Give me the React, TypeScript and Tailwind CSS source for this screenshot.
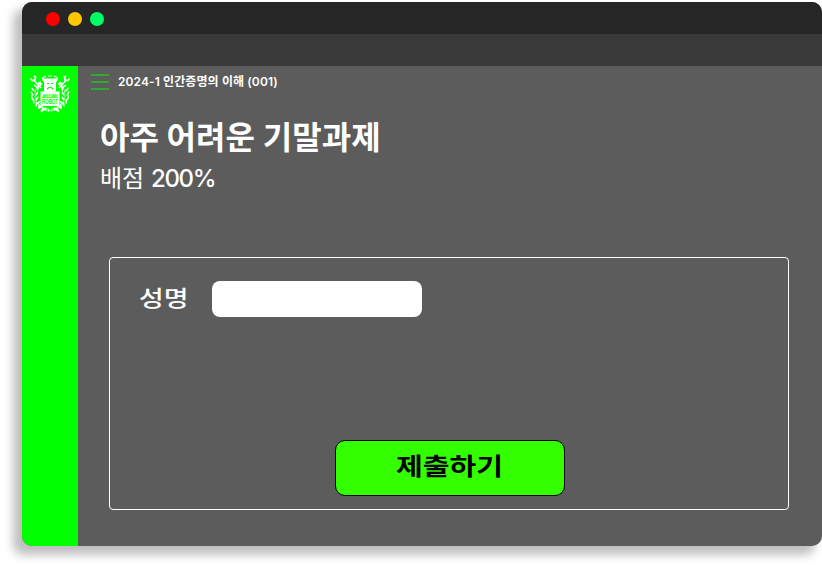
const leaves = [
  [12, 34, -50], [9.5, 31.5, -58], [7, 28, -70], [5.5, 24, -82], [5.5, 19.5, -92], [6.5, 15, -105], [9, 11, -120], [12.5, 7.5, -140],
];

function Branch() {
  return (
    <g>
      <path d="M10 10 Q3 20 8 29 Q12 34 20 35" fill="none" stroke="#fff" strokeWidth="0.6" />
      {leaves.map(([x, y, r]) => (
        <g key={y} transform={`translate(${x} ${y}) rotate(${r})`} fill="#fff">
          <ellipse cx="1" cy="-2.3" rx="2.5" ry="0.9" transform="rotate(-25)" />
          <ellipse cx="1" cy="2.3" rx="2.5" ry="0.9" transform="rotate(25)" />
        </g>
      ))}
      <path d="M1.5 4.5 L3 6.5 L6 6 L6.5 3 L5 2" fill="none" stroke="#fff" strokeWidth="1.7" />
      <path d="M5 6.5 L12 14 M17 34 L12 38" stroke="#fff" strokeWidth="1.4" />
    </g>
  );
}

function Crest() {
  return (
    <svg width="42" height="40" viewBox="0 0 42 40" aria-label="ROBOT">
      <Branch />
      <g transform="translate(42 0) scale(-1 1)"><Branch /></g>
      <path d="M14 3.5 L17 2 M19 2 H23 M25 2 L28 3.5" stroke="#fff" strokeWidth="1.2" />
      <path d="M15 4.5 H27 V16.5 L25 18.5 H17 L15 16.5 Z" fill="#fff" />
      <path d="M18 9.5 H20 M22 9.5 H24 M18.5 15.5 V14.5 L20 13.5 H22 L23.5 14.5 V15.5" stroke="#00ff00" strokeWidth="1.2" fill="none" />
      <rect x="11.5" y="17.5" width="19" height="14.5" fill="#fff" />
      <path d="M13 23.5 H29" stroke="#00ff00" strokeWidth="0.7" />
      <text x="21" y="22.5" textAnchor="middle" fontFamily="Liberation Sans, sans-serif" fontSize="4" fontWeight="bold" fill="#00ff00" textLength="15">ANYVAN</text>
      <text x="21" y="30" textAnchor="middle" fontFamily="Liberation Sans, sans-serif" fontSize="6.5" fontWeight="bold" fill="#00ff00" textLength="16" lengthAdjust="spacingAndGlyphs">ROBOT</text>
      <path d="M13 34 Q21 39 29 34" stroke="#fff" strokeWidth="1.8" strokeDasharray="2 1" fill="none" />
    </svg>
  );
}

export default function App() {
  return (
    <div className="h-[566px] w-[822px] overflow-hidden bg-white pl-[22px] pt-[2px] font-['Inter','Noto_Sans_CJK_KR',sans-serif] text-white">
      <div className="flex h-[544px] w-[800px] flex-col overflow-hidden rounded-[10px] bg-[#5c5c5c] shadow-[-8px_8px_10px_1px_rgba(0,0,0,0.25)]">
        <div className="flex h-8 shrink-0 items-center gap-2 bg-[#262626] pl-6 pt-[2px]">
          <span className="size-3.5 rounded-full bg-[#ff0000]" />
          <span className="size-3.5 rounded-full bg-[#ffc700]" />
          <span className="size-3.5 rounded-full bg-[#00ff66]" />
        </div>
        <div className="h-8 shrink-0 bg-[#3a3a3a]" />
        <div className="flex flex-1">
          <aside className="w-14 shrink-0 bg-[#00ff00] pl-[7px] pt-[8px]">
            <Crest />
          </aside>
          <main className="flex flex-1 flex-col">
            <header className="flex h-8 items-center pl-[13px]">
              <div className="flex w-[18px] flex-col gap-[5px]">
                <span className="h-0.5 bg-[#2eaa2e]" />
                <span className="h-0.5 bg-[#2eaa2e]" />
                <span className="h-0.5 bg-[#2eaa2e]" />
              </div>
              <span className="ml-[9px] whitespace-nowrap text-xs font-semibold tracking-[0.1px]">2024-1 인간증명의 이해 (001)</span>
            </header>
            <div className="pl-[22px] pt-[19px]">
              <h1 className="h-[42px] whitespace-nowrap text-[32px] font-bold leading-[42px] tracking-[0.05px]">아주 어려운 기말과제</h1>
              <p className="h-10 text-2xl leading-10">배점 <span className="font-medium tracking-[-1.3px]">200%</span></p>
            </div>
            <form className="ml-[31px] mt-[58px] flex h-[253px] w-[680px] flex-col items-center rounded border border-white">
              <label className="mt-[23px] flex h-9 items-center self-start pl-[29px]">
                <span className="w-[73px] text-2xl">
                  <span className="inline-block origin-left scale-x-[1.12] scale-y-[0.88] font-medium">성명</span>
                </span>
                <input className="h-9 w-[210px] rounded-lg bg-white px-3 text-black" />
              </label>
              <button type="button" className="ml-0.5 mt-[123px] h-14 w-[230px] rounded-[10px] border border-black bg-[#33ff00] pb-1 text-[28px] leading-none text-black">
                <span className="inline-block scale-x-[1.04] scale-y-[0.86] font-bold">제출하기</span>
              </button>
            </form>
          </main>
        </div>
      </div>
    </div>
  );
}
